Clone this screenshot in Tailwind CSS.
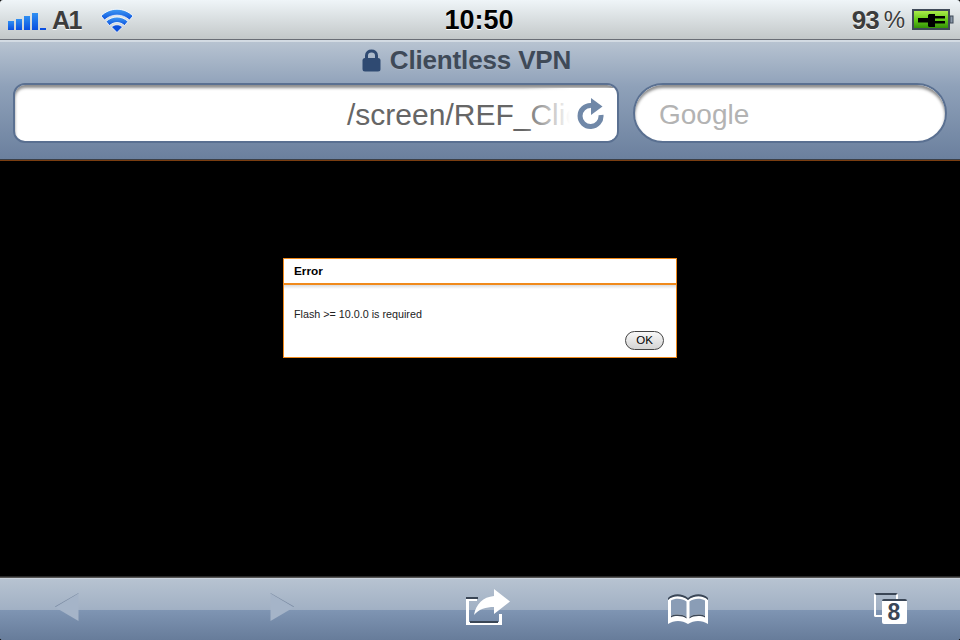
<!DOCTYPE html>
<html><head><meta charset="utf-8">
<script src="https://cdn.jsdelivr.net/npm/@tailwindcss/browser@4"></script>
</head>
<body class="m-0 bg-black">
<div class="w-[960px] h-[640px] rounded-[3px] overflow-hidden flex flex-col font-['Liberation_Sans',Arial,sans-serif]">
  <!-- status bar -->
  <div class="h-[39px] shrink-0 flex items-center pl-[8px] pr-[6px] bg-gradient-to-b from-[#eff5f8] to-[#c3c8c9]">
    <div class="flex-1 flex items-center">
      <svg width="39" height="18" viewBox="0 0 39 18" class="mt-[3px]">
        <defs><linearGradient id="b" x1="0" y1="0" x2="0" y2="1"><stop offset="0" stop-color="#2f8ff2"/><stop offset="1" stop-color="#0a4fe0"/></linearGradient></defs>
        <rect x="0" y="9" width="6" height="9" fill="url(#b)"/><rect x="8" y="7" width="6" height="11" fill="url(#b)"/><rect x="16" y="4" width="6" height="14" fill="url(#b)"/><rect x="24" y="1" width="6" height="17" fill="url(#b)"/><rect x="32" y="16" width="6" height="2" fill="#0a4fe0"/>
      </svg>
      <span class="ml-[5px] w-[31px] text-[25px] leading-[30px] font-bold tracking-[-1.5px] text-[#3c3c3c] [text-shadow:0_1px_0_#fff] mt-[1px]">A1</span>
      <svg width="34" height="26" viewBox="0 0 34 26" class="ml-[17px]">
        <defs><linearGradient id="w" x1="0" y1="0" x2="0" y2="1"><stop offset="0" stop-color="#3f9cf4"/><stop offset="1" stop-color="#0b4fdc"/></linearGradient></defs>
        <path d="M1 9C10 0 24 0 33 9L29.500 13C22.500 6.500 11.500 6.500 4.500 13Z" fill="url(#w)" stroke="#fff" stroke-width=".8"/>
        <path d="M6 14.500C12.500 8.500 21.500 8.500 28 14.500L24.500 18.500C20 14.500 14 14.500 9.500 18.500Z" fill="url(#w)" stroke="#fff" stroke-width=".8"/>
        <path d="M11.500 20C15 17 19 17 22.500 20L17 25.500Z" fill="#0b4fdc" stroke="#fff" stroke-width=".8"/>
      </svg>
    </div>
    <span class="mr-[4px] text-[27px] leading-[30px] font-bold text-black [text-shadow:0_1px_0_#fff] mt-[1px]">10:50</span>
    <div class="flex-1 flex items-center justify-end">
      <span class="text-[26px] leading-[30px] font-bold text-[#3c3c3c] tracking-[-1px] [text-shadow:0_1px_0_#fff] mt-[1px]">93</span>
      <span class="ml-[5px] text-[24px] leading-[30px] text-[#3c3c3c] [text-shadow:0_1px_0_#fff] mt-[1px]">%</span>
      <svg width="42" height="22" viewBox="0 0 42 22" class="ml-[7px]">
        <defs><linearGradient id="g" x1="0" y1="0" x2="0" y2="1"><stop offset="0" stop-color="#b4ee50"/><stop offset=".5" stop-color="#66cc18"/><stop offset="1" stop-color="#2e8a06"/></linearGradient></defs>
        <rect x="1" y="1" width="36" height="19" fill="url(#g)" stroke="#3f4a58" stroke-width="2"/>
        <rect x="38" y="7" width="3" height="7" fill="#8a97a8" stroke="#3f4a58"/>
        <path d="M6 9H16V6.500C16 5.500 17 5 18 5H23V7H33V9.500H23V12H33V14.500H23V18H18C17 18 16 17.500 16 16.500V13.500H6Z" fill="#000"/>
      </svg>
    </div>
  </div>
  <div class="h-[1px] shrink-0 bg-[#6a6e76]"></div>
  <div class="h-[2px] shrink-0 bg-[#d3dbe3]"></div>
  <!-- nav bar -->
  <div class="h-[117px] shrink-0 bg-gradient-to-b from-[#b7c3d1] via-[#8fa1b9] via-[38%] to-[#6b809e] flex flex-col">
    <div class="h-[41px] shrink-0 flex items-center justify-center pr-[27px] pb-[5px]">
      <svg width="19" height="23" viewBox="0 0 19 23" class="mr-[9px] mt-[1px]">
        <path d="M4.500 10V6.500C4.500 3.500 6.800 2 9.500 2S14.500 3.500 14.500 6.500V10" fill="none" stroke="#2f4a72" stroke-width="3"/>
        <rect x="0.500" y="9" width="18" height="13.500" rx="2.500" fill="#2f4a72"/>
      </svg>
      <span class="text-[26px] leading-[30px] font-bold tracking-[-0.15px] text-[#3f4a58] [text-shadow:0_1px_0_#a9b6c8]">Clientless VPN</span>
    </div>
    <div class="flex pl-[13px] gap-[14px]">
      <div class="relative w-[606px] h-[60px] rounded-[12px] border-2 border-[#5a7091] bg-white shadow-[inset_0_3px_3px_#8d8d8d] overflow-hidden flex items-center pl-[332px]">
        <span class="text-[30px] leading-[34px] text-[#666] whitespace-nowrap mt-[3px]">/screen/REF_Clie</span>
        <div class="absolute right-0 top-[3px] bottom-0 w-[94px] bg-gradient-to-r from-white/0 via-white via-[50%] to-white"></div>
        <svg width="30" height="32" viewBox="0 0 30 32" class="absolute right-[10px] top-[12px]">
          <path d="M14 8.500A10.500 10.500 0 1 0 24 18" fill="none" stroke="#7088a8" stroke-width="5"/>
          <path d="M14 1L25.500 9.500L14 18Z" fill="#7088a8"/>
        </svg>
      </div>
      <div class="w-[314px] h-[60px] rounded-[30px] border-2 border-[#5a7091] bg-white shadow-[inset_0_3px_3px_#8d8d8d] flex items-center pl-[24px]">
        <span class="text-[28px] leading-[34px] text-[#b3b3b3] mt-[3px]">Google</span>
      </div>
    </div>
  </div>
  <div class="h-[1px] shrink-0 bg-[#3c4048]"></div>
  <div class="h-[1px] shrink-0 bg-[#7a3d10]"></div>
  <!-- content -->
  <div class="flex-1 bg-black flex justify-center items-start pt-[97px]">
    <div class="w-[394px] h-[100px] bg-white border border-[#f08a1c] flex flex-col text-black">
      <div class="h-[26px] shrink-0 border-b-2 border-[#f08a1c] flex items-center pl-[10px] pt-[2px] text-[11.8px] font-bold">Error</div>
      <div class="h-[4px] shrink-0 bg-gradient-to-b from-[#ddd] to-white"></div>
      <div class="mt-[18px] pl-[10px] text-[10.75px] leading-[14px] text-[#222]">Flash &gt;= 10.0.0 is required</div>
      <div class="flex justify-end pr-[12px] mt-[10px]">
        <div class="w-[39px] h-[19px] rounded-[10px] border border-[#444] bg-gradient-to-b from-[#f8f8f8] to-[#d4d4d4] flex items-center justify-center text-[11.5px]">OK</div>
      </div>
    </div>
  </div>
  <!-- bottom bar -->
  <div class="h-[1px] shrink-0 bg-[#2a2a2a]"></div>
  <div class="h-[1px] shrink-0 bg-[#555]"></div>
  <div class="h-[1px] shrink-0 bg-[#c9d1db]"></div>
  <div class="relative h-[61px] shrink-0 bg-gradient-to-b from-[#b7c3d1] to-[#8c9eb7]">
    <div class="absolute left-0 right-0 top-[31px] bottom-0 bg-gradient-to-b from-[#7f95b3] to-[#677c9a]"></div>
    <div class="relative h-full grid grid-cols-[133px_297px_116px_284px_120px_10px] items-center justify-items-center">
      <svg width="24" height="29" viewBox="0 0 24 29" class="mt-[-4px]"><path d="M23.500 1V28L0.500 14.500Z" fill="#a5b4c8"/><path d="M23.500 0.500L0.500 14L0 13.500L23.500 0Z" fill="#7687a0"/></svg>
      <svg width="24" height="29" viewBox="0 0 24 29" class="mt-[-4px]"><path d="M0.500 1V28L23.500 14.500Z" fill="#a5b4c8"/><path d="M0.500 0.500L23.500 14L24 13.500L0.500 0Z" fill="#7687a0"/></svg>
      <svg width="46" height="38" viewBox="0 0 46 38" class="mt-[-4px]">
        <path d="M1 9.500H12V12H4V33H34V25H37V36H1Z" fill="#fff"/>
        <rect x="1" y="8" width="12" height="2" fill="#3a4656"/>
        <rect x="5" y="32" width="28" height="2" fill="#3a4656"/>
        <path d="M29 0L45 12.500L29 25V18C21 18 14 20 9 26C11 15 18 8 29 7Z" fill="#fff"/>
      </svg>
      <svg width="42" height="32" viewBox="0 0 42 32" class="mt-[-2px]">
        <path d="M1 7C6 2 15 2 21 7C27 2 36 2 41 7V31C35 27 27 27 21 31C15 27 7 27 1 31Z" fill="#fff"/>
        <path d="M1 5C6 0 15 0 21 5C27 0 36 0 41 5V7C36 2 27 2 21 7C15 2 6 2 1 7Z" fill="#3a4656"/>
        <path d="M4 7.500C8 5 15 5 19.500 8.500V24C15 21 8 21 4 23Z" fill="#8a9db6"/>
        <path d="M22.500 8.500C27 5 34 5 38 7.500V23C34 21 27 21 22.500 24Z" fill="#8a9db6"/>
        <path d="M4 23C8 21 15 21 19.500 24V25.500C15 22.500 8 22.500 4 24.500ZM22.500 24C27 21 34 21 38 23V24.500C34 22.500 27 22.500 22.500 25.500Z" fill="#3a4656"/>
      </svg>
      <div class="relative w-[33px] h-[31px] mt-[-2px]">
        <div class="absolute left-0 top-0 w-[24px] h-[24px] rounded-[2px] border-2 border-white border-t-[#3a4656]"></div>
        <div class="absolute left-[8px] top-[6px] w-[25px] h-[25px] rounded-[2px] bg-white border-t-2 border-[#3a4656] flex items-center justify-center text-[23px] leading-[23px] font-bold text-[#3a4656]">8</div>
      </div>
    </div>
  </div>
</div>
</body></html>
